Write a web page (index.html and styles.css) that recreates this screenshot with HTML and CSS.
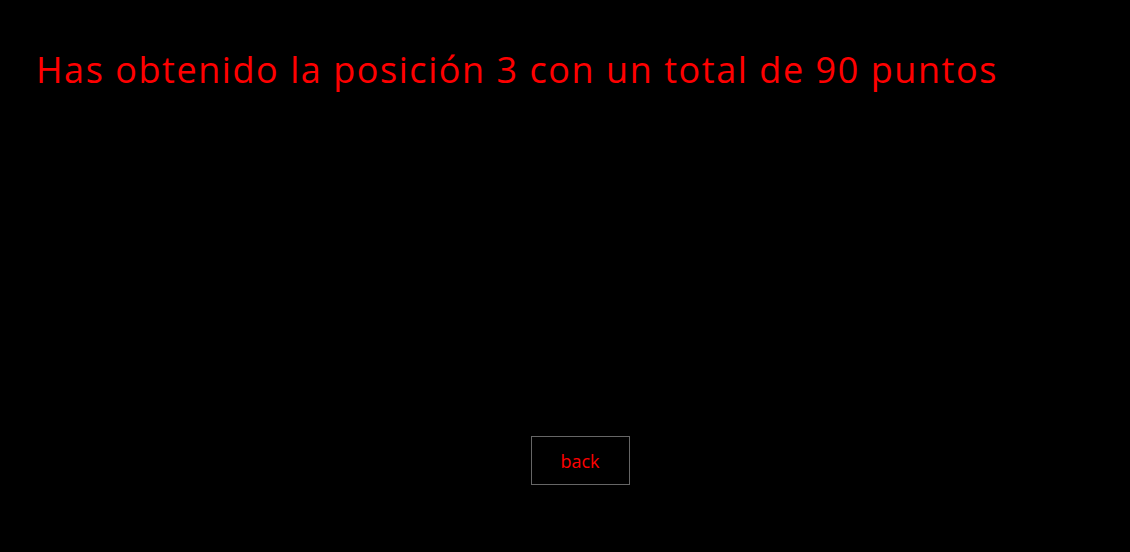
FILE: index.html
```html
<!DOCTYPE html>
<html>
<head>
<meta charset="utf-8">
<link rel="stylesheet" href="styles.css">
</head>
<body>
<main class="page">
  <h1 class="result">Has obtenido la posición 3 con un total de 90 puntos</h1>
  <div class="actions">
    <button class="back">back</button>
  </div>
</main>
</body>
</html>
```
FILE: styles.css
```css
html, body {
  margin: 0;
  padding: 0;
  background: #000;
  height: 100%;
}
.page {
  display: flex;
  flex-direction: column;
  height: 100%;
  font-family: "Comic Sans MS", "Open Sans", sans-serif;
}
.result {
  margin: 42px 0 0 36px;
  font-size: 36px;
  font-weight: normal;
  color: #ff0000;
  line-height: 56px;
  letter-spacing: 1.55px;
  white-space: nowrap;
}
.actions {
  display: flex;
  justify-content: center;
  padding: 0 0 0 30px;
  margin-top: 338px;
}
.back {
  width: 99px;
  height: 49px;
  background: #000;
  color: #ff0000;
  border: 1px solid #666;
  font-family: "Comic Sans MS", "Open Sans", sans-serif;
  font-size: 18px;
  padding: 0;
}
```
